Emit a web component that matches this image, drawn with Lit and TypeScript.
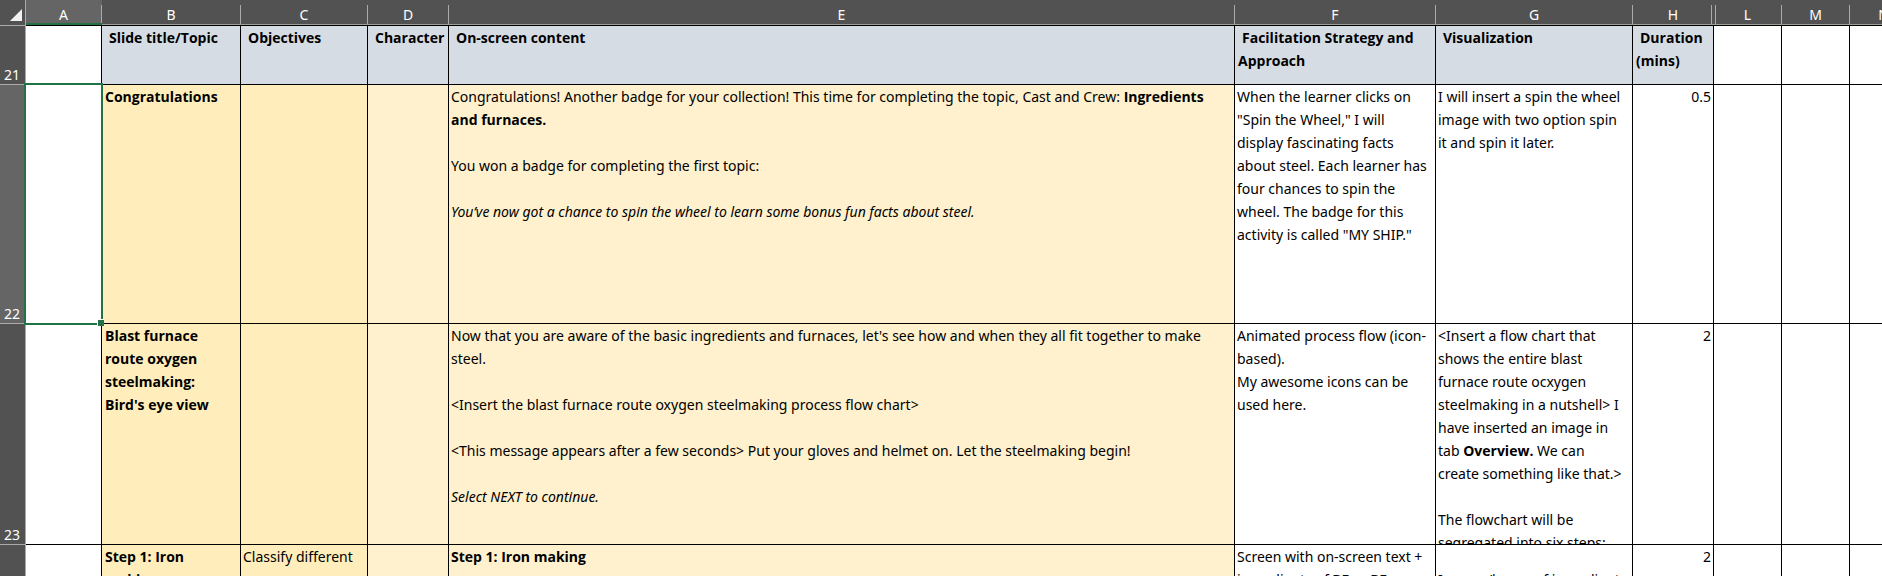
import { LitElement, html, css, TemplateResult } from "lit";
import { customElement, state } from "lit/decorators.js";
import { classMap } from "lit/directives/class-map.js";

type Content = string | TemplateResult;

interface Column {
  id: string;
  tone: string;
}

interface Row {
  number: number;
  height: number;
  heading?: boolean;
  cells: Record<string, Content>;
}

const COLUMNS: Column[] = [
  { id: "A", tone: "plain" },
  { id: "B", tone: "amber" },
  { id: "C", tone: "amber" },
  { id: "D", tone: "cream" },
  { id: "E", tone: "cream" },
  { id: "F", tone: "plain" },
  { id: "G", tone: "plain" },
  { id: "H", tone: "plain" },
  { id: "L", tone: "plain" },
  { id: "M", tone: "plain" },
  { id: "N", tone: "plain" },
];

const HEADED = ["B", "C", "D", "E", "F", "G", "H"];

const ROWS: Row[] = [
  {
    number: 21,
    height: 58,
    heading: true,
    cells: {
      B: "Slide title/Topic",
      C: "Objectives",
      D: "Character",
      E: "On-screen content",
      F: "Facilitation Strategy and Approach",
      G: "Visualization",
      H: "Duration (mins)",
    },
  },
  {
    number: 22,
    height: 238,
    cells: {
      B: html`<b>Congratulations</b>`,
      E: html`<p>Congratulations! Another badge for your collection! This time for completing the topic, Cast and Crew: <b>Ingredients<br />and furnaces.</b></p>
        <p>You won a badge for completing the first topic:</p>
        <p><i>You’ve now got a chance to spin the wheel to learn some bonus fun facts about steel.</i></p>`,
      F: html`When the learner clicks on<br />"Spin the Wheel," I will<br />display fascinating facts<br />about steel. Each learner has<br />four chances to spin the<br />wheel. The badge for this<br />activity is called "MY SHIP."`,
      G: html`I will insert a spin the wheel<br />image with two option spin<br />it and spin it later.`,
      H: "0.5",
    },
  },
  {
    number: 23,
    height: 220,
    cells: {
      B: html`<b>Blast furnace<br />route oxygen<br />steelmaking:<br />Bird's eye view</b>`,
      E: html`<p>Now that you are aware of the basic ingredients and furnaces, let's see how and when they all fit together to make<br />steel.</p>
        <p>&lt;Insert the blast furnace route oxygen steelmaking process flow chart&gt;</p>
        <p>&lt;This message appears after a few seconds&gt; Put your gloves and helmet on. Let the steelmaking begin!</p>
        <p><i>Select NEXT to continue.</i></p>`,
      F: html`Animated process flow (icon-<br />based).<br />My awesome icons can be<br />used here.`,
      G: html`<p>&lt;Insert a flow chart that<br />shows the entire blast<br />furnace route ocxygen<br />steelmaking in a nutshell&gt; I<br />have inserted an image in<br />tab <b>Overview.</b> We can<br />create something like that.&gt;</p>
        <p>The flowchart will be<br />segregated into six steps:</p>`,
      H: "2",
    },
  },
  {
    number: 24,
    height: 220,
    cells: {
      B: html`<b>Step 1: Iron<br />making</b>`,
      C: "Classify different",
      E: html`<b>Step 1: Iron making</b>`,
      F: html`Screen with on-screen text +<br />ingredients of BF or BF`,
      G: html`<br />Images/layers of ingredients`,
      H: "2",
    },
  },
];

@customElement("app-root")
export class AppRoot extends LitElement {
  @state() private selected = { column: "A", row: 22 };

  static styles = css`
    :host {
      display: block;
      height: 100vh;
      overflow: hidden;
      background: #fff;
      color: #000;
      font: 14px/23px "Noto Sans", "Open Sans", sans-serif;
    }
    .sheet {
      width: calc(100% + 36px);
      table-layout: fixed;
      border-collapse: separate;
      border-spacing: 0;
    }
    .col-row { width: 26px; }
    .col-A { width: 76px; }
    .col-B { width: 139px; }
    .col-C { width: 127px; }
    .col-D { width: 81px; }
    .col-F { width: 201px; }
    .col-G { width: 197px; }
    .col-H { width: 81px; }
    .col-L, .col-M, .col-N { width: 68px; }

    th, td { padding: 0; position: relative; }
    b, .title { font-family: "Open Sans", "Noto Sans", sans-serif; font-weight: 700; }

    .corner, .letter { background: #525252; height: 25px; box-sizing: border-box; }
    .letter {
      border-bottom: 1px solid #9b9f96;
      color: #fff;
      font-weight: 400;
      vertical-align: bottom;
    }
    .letter-name {
      display: block;
      height: 19px;
      line-height: 20px;
      border-right: 1px solid #ababab;
    }
    .letter.active { background: #656565; border-bottom: 2px solid #217346; }
    .letter.active .letter-name { height: 18px; }
    .letter.before-gap::after {
      content: "";
      position: absolute;
      z-index: 1;
      right: -2px;
      bottom: 0;
      width: 3px;
      height: 19px;
      background: #525252;
      border: solid #ababab;
      border-width: 0 1px;
    }
    .corner { vertical-align: bottom; border-right: 1px solid #ababab; }
    .corner-mark { display: block; width: 12px; height: 12px; margin: 0 3px 4px auto; fill: #f2f2f2; }

    .number {
      background: #525252;
      color: #fff;
      font-weight: 400;
      vertical-align: bottom;
      text-align: right;
      line-height: 19px;
      padding-right: 5px;
      border-right: 1px solid #ababab;
      border-bottom: 1px solid #ababab;
    }
    .number.active { background: #656565; }
    .first .number { border-top: 1px solid #ababab; }

    .cell {
      vertical-align: top;
      text-align: left;
      border-right: 1px solid #000;
      border-bottom: 1px solid #000;
    }
    .first .cell { border-top: 1px solid #000; }
    .amber { background: #ffeebb; }
    .cream { background: #fff1cd; }
    .title { background: #d6dce4; }
    .text { overflow: hidden; padding: 0 2px; box-sizing: border-box; }
    .amber .text > b { display: block; padding-left: 1px; }
    .title .text { padding: 0 3px; text-indent: 4px; }
    .numeric .text { text-align: right; }
    p { margin: 0 0 23px; }

    .selection {
      position: absolute;
      z-index: 2;
      inset: -2px;
      border: 2px solid #217346;
      pointer-events: none;
    }
    .handle {
      position: absolute;
      right: -3px;
      bottom: -3px;
      width: 6px;
      height: 6px;
      background: #217346;
      border: solid #fff;
      border-width: 1px 0 0 1px;
    }
  `;

  private renderCell(row: Row, column: Column) {
    const titled = !!row.heading && HEADED.includes(column.id);
    const picked = this.selected.column === column.id && this.selected.row === row.number;
    const classes = classMap({
      cell: true,
      title: titled,
      [column.tone]: !row.heading,
      numeric: column.id === "H" && !row.heading,
    });
    const body = html`<div class="text" style="height:${row.height}px">${row.cells[column.id] ?? ""}</div>
      ${picked ? html`<div class="selection"><div class="handle"></div></div>` : ""}`;
    const pick = () => (this.selected = { column: column.id, row: row.number });
    return titled
      ? html`<th class=${classes} scope="col" @click=${pick}>${body}</th>`
      : html`<td class=${classes} @click=${pick}>${body}</td>`;
  }

  render() {
    return html`
      <table class="sheet">
        <colgroup>
          <col class="col-row" />
          ${COLUMNS.map((c) => html`<col class="col-${c.id}" />`)}
        </colgroup>
        <thead>
          <tr>
            <td class="corner">
              <svg class="corner-mark" viewBox="0 0 12 12" aria-hidden="true"><path d="M12 0V12H0Z" /></svg>
            </td>
            ${COLUMNS.map(
              (c) => html`<th
                scope="col"
                class=${classMap({ letter: true, active: c.id === this.selected.column, "before-gap": c.id === "H" })}
              ><span class="letter-name">${c.id}</span></th>`
            )}
          </tr>
        </thead>
        <tbody>
          ${ROWS.map(
            (row, i) => html`<tr class=${i === 0 ? "first" : ""}>
              <th scope="row" class=${classMap({ number: true, active: row.number === this.selected.row })}>${row.number}</th>
              ${COLUMNS.map((c) => this.renderCell(row, c))}
            </tr>`
          )}
        </tbody>
      </table>
    `;
  }
}
